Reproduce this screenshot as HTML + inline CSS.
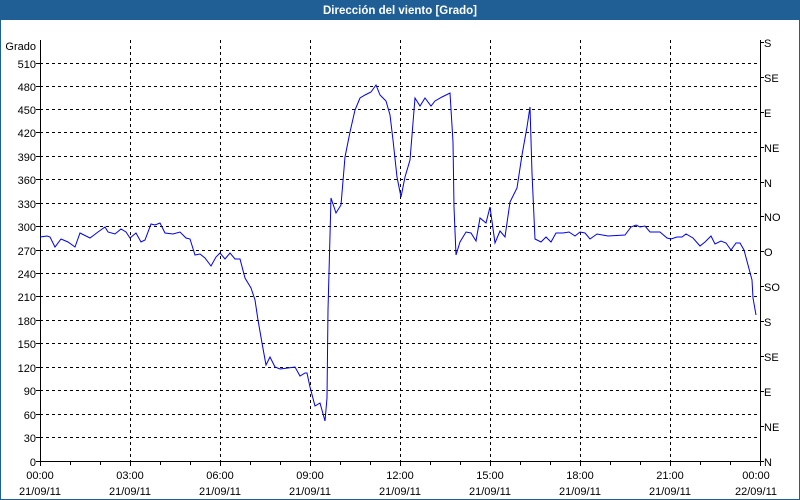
<!DOCTYPE html>
<html><head><meta charset="utf-8"><style>
html,body{margin:0;padding:0;width:800px;height:500px;overflow:hidden;background:#fff}
svg{display:block}
text{font-family:"Liberation Sans",sans-serif;font-size:11px;fill:#000}
</style></head><body>
<svg width="800" height="500" viewBox="0 0 800 500">
<rect x="0" y="0" width="800" height="500" fill="#1f5f96"/>
<rect x="1" y="20" width="798" height="479" fill="#fff"/>
<text x="400" y="14" text-anchor="middle" style="font-weight:bold;fill:#fff;font-size:11.5px">Dirección del viento [Grado]</text>
<g stroke="#000" stroke-width="1" stroke-dasharray="3,3" fill="none">
<path d="M40 63.5H760M40 86.5H760M40 109.5H760M40 132.5H760M40 156.5H760M40 179.5H760M40 203.5H760M40 226.5H760M40 250.5H760M40 273.5H760M40 296.5H760M40 320.5H760M40 343.5H760M40 367.5H760M40 390.5H760M40 414.5H760M40 437.5H760"/>
<path d="M130.5 40V461M220.5 40V461M310.5 40V461M400.5 40V461M490.5 40V461M580.5 40V461M670.5 40V461"/>
</g>
<g stroke="#000" stroke-width="1" fill="none">
<path d="M40.5 40V461.5H760.5V40"/>
<path d="M70.5 461V465M100.5 461V465M160.5 461V465M190.5 461V465M250.5 461V465M280.5 461V465M340.5 461V465M370.5 461V465M430.5 461V465M460.5 461V465M520.5 461V465M550.5 461V465M610.5 461V465M640.5 461V465M700.5 461V465M730.5 461V465M40.5 461V466M130.5 461V466M220.5 461V466M310.5 461V466M400.5 461V466M490.5 461V466M580.5 461V466M670.5 461V466M760.5 461V466"/>
<path d="M36 63.5H40M36 86.5H40M36 109.5H40M36 132.5H40M36 156.5H40M36 179.5H40M36 203.5H40M36 226.5H40M36 250.5H40M36 273.5H40M36 296.5H40M36 320.5H40M36 343.5H40M36 367.5H40M36 390.5H40M36 414.5H40M36 437.5H40M36 461.5H40"/>
<path d="M760 42.5H764M760 77.5H764M760 112.5H764M760 147.5H764M760 182.5H764M760 216.5H764M760 251.5H764M760 286.5H764M760 321.5H764M760 356.5H764M760 391.5H764M760 426.5H764M760 461.5H764"/>
</g>
<g text-anchor="end">
<text x="36" y="50">Grado</text>
<text x="36" y="68">510</text><text x="36" y="91">480</text><text x="36" y="114">450</text><text x="36" y="137">420</text><text x="36" y="161">390</text><text x="36" y="184">360</text><text x="36" y="208">330</text><text x="36" y="231">300</text><text x="36" y="255">270</text><text x="36" y="278">240</text><text x="36" y="301">210</text><text x="36" y="325">180</text><text x="36" y="348">150</text><text x="36" y="372">120</text><text x="36" y="395">90</text><text x="36" y="419">60</text><text x="36" y="442">30</text><text x="36" y="466">0</text>
</g>
<g>
<text x="764" y="47">S</text><text x="764" y="82">SE</text><text x="764" y="117">E</text><text x="764" y="152">NE</text><text x="764" y="187">N</text><text x="764" y="221">NO</text><text x="764" y="256">O</text><text x="764" y="291">SO</text><text x="764" y="326">S</text><text x="764" y="361">SE</text><text x="764" y="396">E</text><text x="764" y="431">NE</text><text x="764" y="466">N</text>
</g>
<g text-anchor="middle">
<text x="40" y="479">00:00</text><text x="40" y="495">21/09/11</text>
<text x="130" y="479">03:00</text><text x="130" y="495">21/09/11</text>
<text x="220" y="479">06:00</text><text x="220" y="495">21/09/11</text>
<text x="310" y="479">09:00</text><text x="310" y="495">21/09/11</text>
<text x="400" y="479">12:00</text><text x="400" y="495">21/09/11</text>
<text x="490" y="479">15:00</text><text x="490" y="495">21/09/11</text>
<text x="580" y="479">18:00</text><text x="580" y="495">21/09/11</text>
<text x="670" y="479">21:00</text><text x="670" y="495">21/09/11</text>
<text x="756" y="479">00:00</text><text x="756" y="495">22/09/11</text>
</g>
<polyline fill="none" stroke="#0000ee" stroke-width="1" points="40,237 47,236 50,237 55,247 61,239 68,242 75,247 80,233 90,238 98,232 105,227 108,232 115,234 121,229 126,232 130,238 136,233 141,242 145,240 151,224 155,225 160,223 165,233 173,234 180,232 186,238 190,239 195,255 200,254 205,258 211,266 216,257 220,253 225,259 230,253 235,259 240,259 245,278 251,288 255,300 258,320 262,343 266,365 270,357 275,367 280,369 288,368 295,367 300,376 305,373 307,373 310,387 315,406 320,403 325,421 327,398 328,310 331,198 336,213 341,205 345,157 350,132 355,110 360,98 365,95 371,92 376,85 380,95 386,101 390,115 393,140 397,177 401,197 405,177 410,160 415,98 420,106 425,98 431,106 435,101 442,97 450,93 453,142 454,207 456,255 460,242 466,232 471,233 476,241 480,218 486,223 490,207 495,243 500,231 505,237 510,202 517,188 522,155 527,127 530,107 532,173 535,239 541,242 546,237 551,242 556,233 563,233 569,232 575,236 580,232 585,233 590,239 597,234 608,236 625,235 631,227 636,225 640,227 645,226 650,232 660,232 667,238 671,239 677,237 682,237 686,234 693,238 700,246 705,242 711,236 715,244 721,241 726,243 731,250 736,243 740,243 744,250 748,265 752,280 753,298 756,315"/>
</svg>
</body></html>
